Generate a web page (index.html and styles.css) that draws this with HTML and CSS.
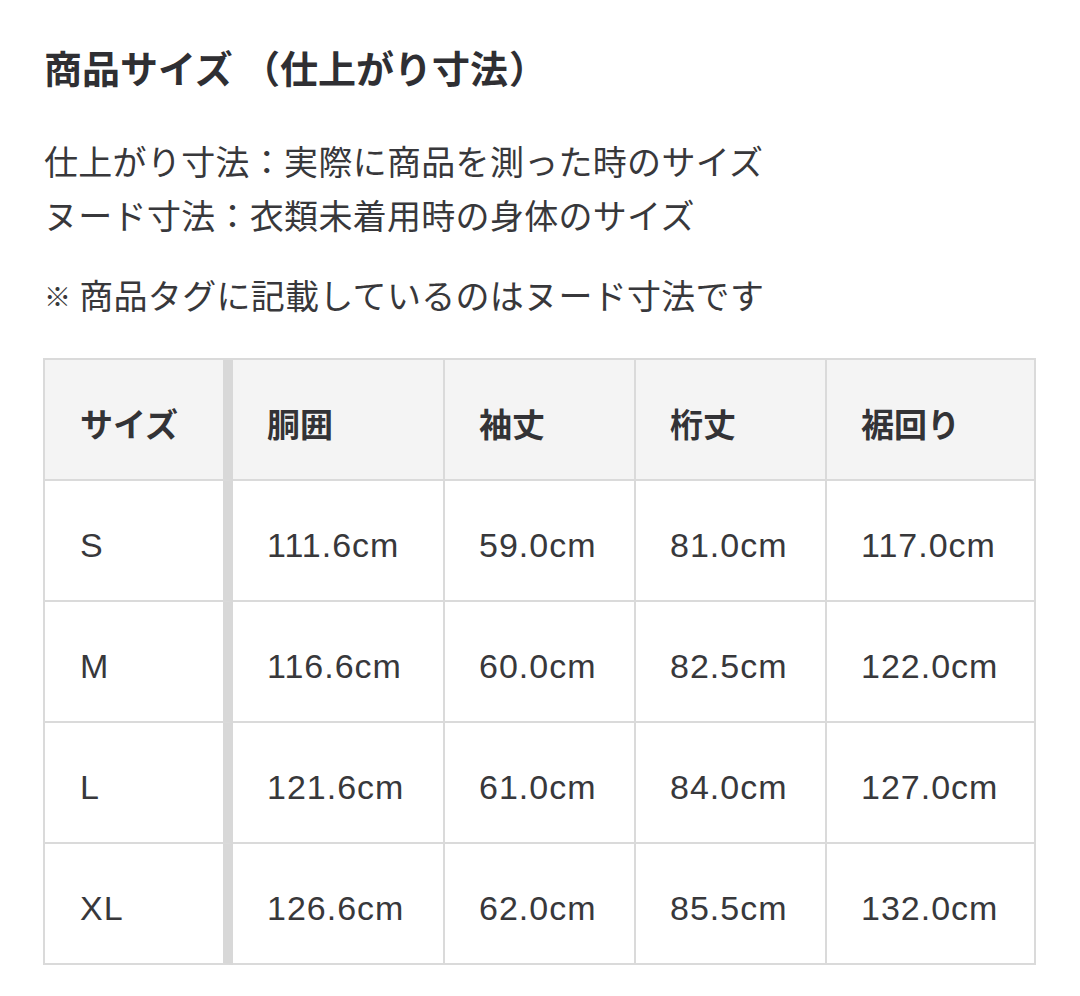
FILE: index.html
```html
<!DOCTYPE html>
<html lang="ja">
<head>
<meta charset="utf-8">
<title>商品サイズ</title>
<link rel="stylesheet" href="styles.css">
</head>
<body>
<main class="page">
  <h1 class="title">商品サイズ<span class="paren-open">（</span>仕上がり寸法<span class="paren-close">）</span></h1>
  <div class="notes">
    <p class="note">仕上がり寸法：実際に商品を測った時のサイズ</p>
    <p class="note">ヌード寸法：衣類未着用時の身体のサイズ</p>
  </div>
  <p class="note tag-note"><span class="mark">※</span> 商品タグに記載しているのはヌード寸法です</p>
  <table class="size-table">
    <thead>
      <tr>
        <th class="c1">サイズ</th>
        <th class="c2">胴囲</th>
        <th class="c3">袖丈</th>
        <th class="c4">桁丈</th>
        <th class="c5">裾回り</th>
      </tr>
    </thead>
    <tbody>
      <tr><td class="c1">S</td><td>111.6cm</td><td>59.0cm</td><td>81.0cm</td><td>117.0cm</td></tr>
      <tr><td class="c1">M</td><td>116.6cm</td><td>60.0cm</td><td>82.5cm</td><td>122.0cm</td></tr>
      <tr><td class="c1">L</td><td>121.6cm</td><td>61.0cm</td><td>84.0cm</td><td>127.0cm</td></tr>
      <tr><td class="c1">XL</td><td>126.6cm</td><td>62.0cm</td><td>85.5cm</td><td>132.0cm</td></tr>
    </tbody>
  </table>
</main>
</body>
</html>
```

FILE: styles.css
```css
html, body {
  margin: 0;
  padding: 0;
  background: #ffffff;
}

.page {
  padding: 38px 0 0 43px;
  color: #333336;
  font-family: "Noto Sans CJK JP", "Noto Sans", sans-serif;
}

.title {
  margin: 0;
  font-size: 38px;
  line-height: 57px;
  font-weight: 700;
  padding-left: 1px;
  color: #2f2f33;
}

.paren-open {
  margin-left: 9px;
}

.paren-close {
  margin-left: 1px;
}

.notes {
  margin-top: 39px;
}

.note {
  margin: 0;
  font-size: 34px;
  line-height: 54px;
  font-weight: 400;
  letter-spacing: 0.3px;
  padding-left: 1px;
  color: #38383b;
}

.tag-note {
  margin-top: 26px;
}

.mark {
  font-size: 27px;
  vertical-align: 2px;
}

.size-table {
  margin-top: 35px;
  width: 993px;
  table-layout: fixed;
  border-collapse: separate;
  border-spacing: 0;
  border-top: 2px solid #dadada;
  border-left: 2px solid #dadada;
}

.size-table th,
.size-table td {
  box-sizing: border-box;
  height: 121px;
  padding: 6px 0 0 34px;
  text-align: left;
  vertical-align: middle;
  border-right: 2px solid #dadada;
  border-bottom: 2px solid #dadada;
}

.size-table th {
  background: #f4f4f4;
  font-family: "Noto Sans CJK JP", sans-serif;
  font-size: 33px;
  font-weight: 700;
  color: #333336;
}

.size-table td {
  font-family: "Liberation Sans", Arial, sans-serif;
  font-size: 34px;
  font-weight: 400;
  letter-spacing: 1px;
  color: #38383b;
  padding-top: 10px;
}

.size-table .c1 {
  border-right: 10px solid #d8d8d8;
  padding-left: 35px;
}

.size-table th.c1 { width: 188px; }
.size-table th.c2 { width: 212px; }
.size-table th.c3 { width: 191px; }
.size-table th.c4 { width: 191px; }
.size-table th.c5 { width: 209px; }
```
